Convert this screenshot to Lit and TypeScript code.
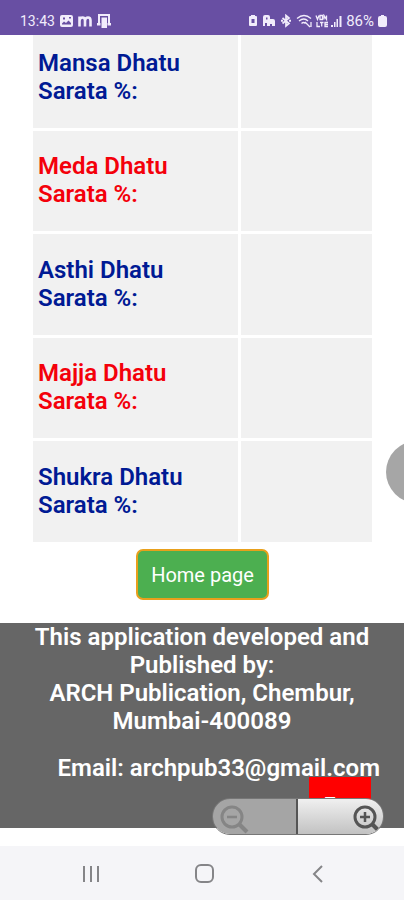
import { LitElement, html, css, svg } from "lit";
import { customElement, property } from "lit/decorators.js";
import { classMap } from "lit/directives/class-map.js";

@customElement("status-bar")
class StatusBar extends LitElement {
  static styles = css`
    :host {
      display: flex;
      align-items: center;
      justify-content: space-between;
      height: 35px;
      box-sizing: border-box;
      padding: 7px 17px 0 20px;
      background: #684fa3;
      color: #f1ecfb;
      font: 15px/20px Roboto, sans-serif;
      position: relative;
      z-index: 2;
    }
    .group {
      display: flex;
      align-items: center;
      gap: 4px;
    }
    .notices {
      gap: 5px;
    }
    svg {
      display: block;
      fill: currentColor;
    }
    .time {
      font-size: 14px;
    }
  `;
  render() {
    return html`
      <div class="group notices">
        <span class="time">13:43</span>
        <svg width="13" height="12" viewBox="0 0 13 12"><path fill-rule="evenodd" d="M2 0h9a2 2 0 0 1 2 2v8a2 2 0 0 1-2 2H2a2 2 0 0 1-2-2V2a2 2 0 0 1 2-2zM2 9.500h9V8L8.500 5.500 6 8 4 6.500 2 8.500zM3 2.500v2h2v-2zM9 2v1.500h2V2z"/></svg>
        <svg width="14" height="12" viewBox="0 0 14 12"><path d="M1.500 11.500V1.500M1.500 5.500Q2 2.500 4.500 2.500T7 5.500V11.500M7 5.500Q7.500 2.500 10 2.500T12.500 5.500V11.500" fill="none" stroke="currentColor" stroke-width="2.600"/></svg>
        <svg width="14" height="14" viewBox="0 0 14 14"><path d="M2 10V1h10v9" fill="none" stroke="currentColor" stroke-width="2"/><path d="M4.500 3.500h5.500V14H4.500zM0 9h3.500v2.500H0zM10.500 9H14v2.500h-3.500z"/></svg>
      </div>
      <div class="group">
        <svg width="94" height="14" viewBox="0 0 94 14">
          <path fill-rule="evenodd" d="M2 2h1V1h4v1h1q1 0 1 1v8q0 1-1 1H2q-1 0-1-1V3q0-1 1-1zM3.500 5v4h3V5z"/>
          <path fill-rule="evenodd" d="M15 12V3q0-2 2-2h3q2 0 2 2v2h3q2 0 2 2v5h-3v-2h-2v2h-3V9h-2v3zM18 3.500v2h1.500v-2z"/>
          <g fill="none" stroke="currentColor" stroke-width="1.300">
            <path d="M34.500 4l6.500 5.500-3 2.500V1.500L41 4l-6.500 5.500" stroke-width="1.700"/>
            <path d="M33 6.700h2M41 6.700h2" stroke-width="2"/>
            <path d="M49 4.500q7-6 14 0M51 7q5-4 9 0M53.500 9.500q2-2 4 0M57 8l5 5M63 8v5"/>
            <path d="M68 1.500l1.500 4 1.500-4M72 1.500h2.500v4H72zM76 5.500v-4l2.500 4v-4M69 8v4.500h3M72 8.500h3.500M73.700 8.500v4M80 8.500h-3v4h3M77 10.500h3"/>
          </g>
          <path d="M83 11h2v2h-2zM86 8h1.500v5H86zM88.500 5h1.500v8h-1.500zM91.500 2h2v11h-2z"/>
        </svg>
        <span>86%</span>
        <svg width="9" height="12" viewBox="0 0 9 12"><path d="M2 1h1V0h3v1h1q2 0 2 2v7q0 2-2 2H2q-2 0-2-2V3q0-2 2-2z"/></svg>
      </div>
    `;
  }
}

@customElement("zoom-controls")
class ZoomControls extends LitElement {
  static styles = css`
    :host {
      display: flex;
      box-sizing: border-box;
      width: 172px;
      height: 37px;
      border: 1px solid #777;
      border-radius: 18px;
      overflow: hidden;
    }
    button {
      display: flex;
      align-items: flex-end;
      box-sizing: border-box;
      width: 50%;
      padding: 0;
      border: 0;
      color: #555;
      background: linear-gradient(#f0f0f0, #c2c2c2);
    }
    .out {
      justify-content: flex-start;
      padding-left: 6px;
      color: #858585;
      background: #a5a5a5;
      border-right: 2px solid #555;
    }
    .in {
      justify-content: flex-end;
    }
  `;
  private lens(plus: boolean) {
    return html`<svg width="31" height="30" viewBox="0 0 31 30" fill="none" stroke="currentColor">
      <circle cx="13" cy="13" r="10" stroke-width="3" />
      <path d="M8 13h10" stroke-width="2.500" />
      ${plus ? svg`<path d="M13 8v10" stroke-width="2.500" />` : ""}
      <path d="M20 20l8 8" stroke-width="4" />
    </svg>`;
  }
  render() {
    return html`
      <button class="out" aria-label="Zoom out" disabled>${this.lens(false)}</button>
      <button class="in" aria-label="Zoom in">${this.lens(true)}</button>
    `;
  }
}

@customElement("nav-bar")
class NavBar extends LitElement {
  static styles = css`
    :host {
      display: flex;
      justify-content: space-evenly;
      align-items: center;
      gap: 16px;
      height: 54px;
      padding: 2px 0 0 5px;
      box-sizing: border-box;
      background: #f5f5f8;
    }
    button {
      display: flex;
      justify-content: center;
      padding: 0;
      width: 24px;
      border: 0;
      background: none;
      color: #858588;
    }
    svg {
      fill: none;
      stroke: currentColor;
      stroke-width: 2;
    }
  `;
  render() {
    return html`
      <button aria-label="Recent apps"><svg width="20" height="20"><path d="M3 2v16M10 2v16M17 2v16" /></svg></button>
      <button aria-label="Home"><svg width="20" height="20"><rect x="1" y="1" width="17" height="17" rx="5" /></svg></button>
      <button aria-label="Back"><svg width="20" height="20"><path d="M14 2l-8 8 8 8" /></svg></button>
    `;
  }
}

@customElement("app-root")
class AppRoot extends LitElement {
  @property({ attribute: false }) rows = ["Mansa", "Meda", "Asthi", "Majja", "Shukra"];

  static styles = css`
    :host {
      display: flex;
      flex-direction: column;
      min-height: 100vh;
      position: relative;
      overflow: hidden;
      background: #fff;
      font: 24px/28px Roboto, sans-serif;
    }
    main {
      display: flex;
      flex-direction: column;
      padding: 0 29px 0 30px;
    }
    table {
      width: 100%;
      margin-top: -11px;
      border-spacing: 3px;
      table-layout: fixed;
    }
    .label-col {
      width: 61%;
    }
    tr {
      height: 101px;
    }
    tr:nth-child(even) {
      height: 100px;
    }
    th,
    td {
      padding: 0 5px 2px;
      background: #f1f1f1;
      text-align: left;
      color: #001a94;
      font-weight: 600;
    }
    .red th {
      color: #f4000a;
    }
    .home {
      align-self: center;
      margin: 4px 0 23px;
      height: 51px;
      padding: 0 13px;
      border: 2px solid #e8a01c;
      border-radius: 7px;
      background: #4caf50;
      color: #fff;
      font: 20px/28px Roboto, sans-serif;
    }
    footer {
      position: relative;
      height: 205px;
      background: #666;
      color: #fff;
      font-weight: 600;
      text-align: center;
    }
    p {
      margin: 0 24px 19px;
    }
    .email {
      text-align: right;
    }
    a {
      color: inherit;
      text-decoration: none;
    }
    .top {
      position: absolute;
      right: 33px;
      bottom: -2px;
      height: 53px;
      padding: 0 16px;
      border: 0;
      background: #f00;
      color: #fff;
      font: 18px/21px Roboto, sans-serif;
    }
    zoom-controls {
      position: absolute;
      right: 20px;
      bottom: -7px;
    }
    nav-bar {
      margin-top: auto;
    }
    .bubble {
      position: absolute;
      right: -44px;
      top: 441px;
      width: 62px;
      height: 62px;
      padding: 0;
      border: 0;
      border-radius: 50%;
      background: #a6a6a6;
    }
  `;

  render() {
    return html`
      <status-bar></status-bar>
      <main>
        <table>
          <colgroup><col class="label-col" /><col /></colgroup>
          <tbody>
            ${this.rows.map(
              (name, i) => html`<tr class=${classMap({ red: i % 2 === 1 })}>
                <th scope="row">${name} Dhatu<br />Sarata %:</th>
                <td></td>
              </tr>`
            )}
          </tbody>
        </table>
        <button class="home">Home page</button>
      </main>
      <footer>
        <p>This application developed and Published by:<br />ARCH Publication, Chembur, Mumbai-400089</p>
        <p class="email">Email: <a href="mailto:archpub33@gmail.com">archpub33@gmail.com</a></p>
        <button class="top">Top</button>
        <zoom-controls></zoom-controls>
      </footer>
      <nav-bar></nav-bar>
      <button class="bubble" aria-label="Edge panel"></button>
    `;
  }
}
